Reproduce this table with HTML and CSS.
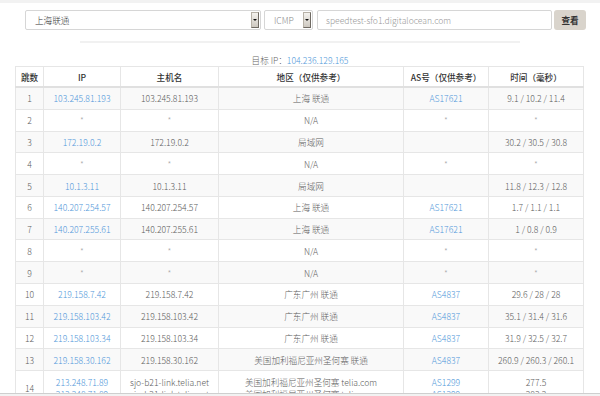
FILE: index.html
```html
<!DOCTYPE html>
<html lang="zh-CN">
<head>
<meta charset="utf-8">
<title>Traceroute</title>
<link rel="stylesheet" href="styles.css">
</head>
<body>
<div class="topbar"></div>
<form class="query">
  <div class="field field-region"><span class="value">上海联通</span><i class="arrow"></i></div>
  <div class="field field-proto"><span class="value">ICMP</span><i class="arrow"></i></div>
  <div class="field field-host"><span class="value">speedtest-sfo1.digitalocean.com</span></div>
  <button class="btn" type="button">查看</button>
</form>
<div class="divider"></div>
<p class="target">目标 IP：<a class="link">104.236.129.165</a></p>
<table class="trace">
  <colgroup>
    <col class="c-hop"><col class="c-ip"><col class="c-host"><col class="c-area"><col class="c-as"><col class="c-time">
  </colgroup>
  <thead>
    <tr><th>跳数</th><th>IP</th><th>主机名</th><th>地区（仅供参考）</th><th>AS号（仅供参考）</th><th>时间（毫秒）</th></tr>
  </thead>
  <tbody>
    <tr><td>1</td><td><a class="link">103.245.81.193</a></td><td>103.245.81.193</td><td>上海 联通</td><td><a class="link">AS17621</a></td><td>9.1 / 10.2 / 11.4</td></tr>
    <tr><td>2</td><td class="star">*</td><td class="star">*</td><td>N/A</td><td class="star">*</td><td class="star">*</td></tr>
    <tr><td>3</td><td><a class="link">172.19.0.2</a></td><td>172.19.0.2</td><td>局域网</td><td></td><td>30.2 / 30.5 / 30.8</td></tr>
    <tr><td>4</td><td class="star">*</td><td class="star">*</td><td>N/A</td><td class="star">*</td><td class="star">*</td></tr>
    <tr><td>5</td><td><a class="link">10.1.3.11</a></td><td>10.1.3.11</td><td>局域网</td><td></td><td>11.8 / 12.3 / 12.8</td></tr>
    <tr><td>6</td><td><a class="link">140.207.254.57</a></td><td>140.207.254.57</td><td>上海 联通</td><td><a class="link">AS17621</a></td><td>1.7 / 1.1 / 1.1</td></tr>
    <tr><td>7</td><td><a class="link">140.207.255.61</a></td><td>140.207.255.61</td><td>上海 联通</td><td><a class="link">AS17621</a></td><td>1 / 0.8 / 0.9</td></tr>
    <tr><td>8</td><td class="star">*</td><td class="star">*</td><td>N/A</td><td class="star">*</td><td class="star">*</td></tr>
    <tr><td>9</td><td class="star">*</td><td class="star">*</td><td>N/A</td><td class="star">*</td><td class="star">*</td></tr>
    <tr><td>10</td><td><a class="link">219.158.7.42</a></td><td>219.158.7.42</td><td>广东广州 联通</td><td><a class="link">AS4837</a></td><td>29.6 / 28 / 28</td></tr>
    <tr><td>11</td><td><a class="link">219.158.103.42</a></td><td>219.158.103.42</td><td>广东广州 联通</td><td><a class="link">AS4837</a></td><td>35.1 / 31.4 / 31.6</td></tr>
    <tr><td>12</td><td><a class="link">219.158.103.34</a></td><td>219.158.103.34</td><td>广东广州 联通</td><td><a class="link">AS4837</a></td><td>31.9 / 32.5 / 32.7</td></tr>
    <tr><td>13</td><td><a class="link">219.158.30.162</a></td><td>219.158.30.162</td><td>美国加利福尼亚州圣何塞 联通</td><td><a class="link">AS4837</a></td><td>260.9 / 260.3 / 260.1</td></tr>
    <tr><td>14</td><td><a class="link">213.248.71.89</a><br><a class="link">213.248.71.89</a></td><td>sjo-b21-link.telia.net<br>sjo-b21-link.telia.net</td><td>美国加利福尼亚州圣何塞 telia.com<br>美国加利福尼亚州圣何塞 telia.com</td><td><a class="link">AS1299</a><br><a class="link">AS1299</a></td><td>277.5<br>283.2</td></tr>
  </tbody>
</table>
<div class="bottombar"></div>
</body>
</html>
```

FILE: styles.css
```css
* { box-sizing: border-box; }

body {
  margin: 0;
  background: #fff;
  font-family: "Noto Sans CJK SC", "Liberation Sans", sans-serif;
  font-size: 8.6px;
  font-weight: 300;
  color: #666;
}

.topbar {
  height: 3px;
  background: #f2f2f2;
}

.query {
  display: flex;
  height: 20px;
  margin: 7px 0 0 25px;
}

.field {
  display: flex;
  align-items: center;
  height: 20px;
  padding: 0 1px 0 9px;
  border: 1px solid #d6d6d6;
  border-radius: 2px;
  background: #fff;
  line-height: 12px;
}

.field .value { flex: 1; white-space: nowrap; }

.field-region { width: 236px; color: #333; }
.field-proto { width: 49px; margin-left: 3px; color: #888; padding-left: 9px; }
.field-host { width: 235px; margin-left: 4px; color: #999; padding-left: 8px; }

.arrow {
  display: flex;
  align-items: center;
  justify-content: center;
  width: 8px;
  height: 16px;
  background: linear-gradient(#f4f2ee, #cdc8c0);
  border: 1px solid #b7b1a7;
  border-right-color: #6f6a63;
  border-bottom-color: #6f6a63;
}

.arrow::after {
  content: "";
  border-left: 2px solid transparent;
  border-right: 2px solid transparent;
  border-top: 2px solid #111;
}

.btn {
  width: 32px;
  height: 20px;
  margin-left: 2px;
  padding: 0;
  border: 0;
  border-radius: 3px;
  background: #d9d4cc;
  color: #333;
  font: inherit;
  font-weight: bold;
}

.divider {
  width: 440px;
  height: 2px;
  margin: 11px auto 0;
  background: #f1f1f1;
}

.target {
  margin: 12px 0 0;
  line-height: 11px;
  text-align: center;
  color: #666;
}

.link { color: #5097d9; text-decoration: none; }

.trace {
  width: 568px;
  margin-left: 15px;
  border-collapse: collapse;
  table-layout: fixed;
}

.c-hop { width: 28px; }
.c-ip { width: 77px; }
.c-host { width: 98px; }
.c-area { width: 185px; }
.c-as { width: 85px; }
.c-time { width: 95px; }

.trace th,
.trace td {
  border: 1px solid #e6e6e6;
  text-align: center;
  line-height: 12px;
  white-space: nowrap;
  overflow: hidden;
}

.trace th {
  padding: 3.5px 0;
  color: #333;
  font-weight: 500;
  border-bottom: 2px solid #e0e0e0;
}

.trace td {
  padding: 4.4px 0;
  color: #5c5c5c;
}

.trace tbody tr:nth-child(odd) td { background: #f9f9f9; }

.trace td.star { color: #aaa; }

.bottombar {
  position: fixed;
  left: 0;
  right: 0;
  bottom: 0;
  height: 3px;
  border-top: 1px solid #cfcfcf;
  background: #f2f2f2;
}
```
